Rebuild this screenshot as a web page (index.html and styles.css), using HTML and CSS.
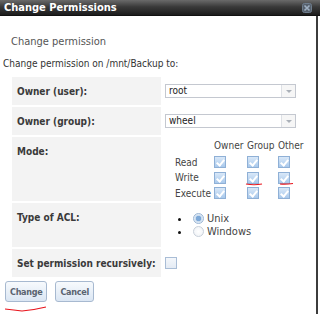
FILE: index.html
```html
<!DOCTYPE html>
<html lang="en">
    <head>
        <meta charset="UTF-8" />
        <title>Change Permissions</title>
        <link rel="stylesheet" href="styles.css">
    </head>
    <body>
        <div class="dialog">
            <div class="titlebar">
                <span class="title">Change Permissions</span>
                <svg class="close" width="10" height="10" viewBox="0 0 10 10">
                    <rect x="0.5" y="0.5" width="9" height="9" rx="2" fill="#56606c" stroke="#6d7c8c" />
                    <path d="M2.5 2.5 L7.5 7.5 M7.5 2.5 L2.5 7.5" stroke="#9fb0c2" stroke-width="1.6" />
                </svg>
            </div>

            <div class="content">
                <p class="subtitle">Change permission</p>
                <p class="intro">Change permission on /mnt/Backup to:</p>

                <div class="form">
                    <div class="row">
                        <div class="label">Owner (user):</div>
                        <div class="field">
                            <div class="select"><span>root</span><i class="arrow"></i></div>
                        </div>
                    </div>
                    <div class="row">
                        <div class="label">Owner (group):</div>
                        <div class="field">
                            <div class="select"><span>wheel</span><i class="arrow"></i></div>
                        </div>
                    </div>
                    <div class="row row-mode">
                        <div class="label">Mode:</div>
                        <div class="field">
                            <div class="mode">
                                <span></span><span>Owner</span><span>Group</span><span>Other</span>
                                <span>Read</span><i class="check on"></i><i class="check on"></i><i class="check on"></i>
                                <span>Write</span><i class="check on"></i><i class="check on"></i><i class="check on"></i>
                                <span>Execute</span><i class="check on"></i><i class="check on"></i><i class="check on"></i>
                            </div>
                        </div>
                    </div>
                    <div class="row row-acl">
                        <div class="label">Type of ACL:</div>
                        <div class="field">
                            <ul class="acl">
                                <li><i class="radio on"></i>Unix</li>
                                <li><i class="radio"></i>Windows</li>
                            </ul>
                        </div>
                    </div>
                    <div class="row">
                        <div class="label">Set permission recursively:</div>
                        <div class="field">
                            <i class="check"></i>
                        </div>
                    </div>
                </div>

                <div class="buttons">
                    <button class="btn">Change</button>
                    <button class="btn">Cancel</button>
                </div>
            </div>

            <!-- hand-drawn red marks -->
            <svg class="marks" width="320" height="314" viewBox="0 0 320 314">
                <path d="M246 184 Q254 185.5 262 184" />
                <path d="M280 184 Q286 184.5 293 183.5" />
                <path d="M5 309 Q14 310 22 311 Q34 310 46 307" />
            </svg>
        </div>
    </body>
</html>
```

FILE: styles.css
```css
* {
    margin: 0;
    padding: 0;
    box-sizing: border-box;
}

body {
    font-family: "DejaVu Sans", Verdana, sans-serif;
    font-stretch: condensed;
    font-size: 10px;
    color: #333;
    background: #fff;
}

.dialog {
    position: relative;
    width: 320px;
    height: 314px;
}

.titlebar {
    height: 16px;
    display: flex;
    align-items: center;
    justify-content: space-between;
    padding: 0 8px 0 4px;
    background: linear-gradient(#6a6a6a, #3a3a3a 45%, #1c1c1c);
    border-bottom: 1px solid #111;
}

.title {
    color: #fff;
    font-weight: bold;
    font-size: 11px;
}

.close {
    display: block;
}

.content {
    height: 298px;
    width: 318px;
    border-right: 2px solid #3c3c3c;
}

.subtitle {
    padding: 19px 0 0 11px;
    line-height: 14px;
    color: #555;
    font-size: 11px;
}

.intro {
    padding: 8px 0 0 3px;
    line-height: 14px;
    color: #333;
}

.form {
    margin: 6px 8px 0 12px;
    display: flex;
    flex-direction: column;
    gap: 2px;
}

.row {
    display: flex;
    min-height: 28px;
}

.row-mode {
    min-height: 63px;
}

.row-acl {
    min-height: 44px;
}

.label {
    width: 149px;
    background: #f3f3f3;
    padding: 9px 0 0 5px;
    font-weight: bold;
    color: #3a3a3a;
    line-height: 12px;
}

.field {
    flex: 1;
    display: flex;
    align-items: center;
    padding-left: 4px;
}

.select {
    width: 131px;
    height: 14px;
    display: flex;
    border: 1px solid #c4c8d0;
    background: #fff;
    line-height: 12px;
    color: #222;
}

.select span {
    flex: 1;
    padding-left: 3px;
}

.arrow {
    width: 14px;
    border-left: 1px solid #dde0e5;
    background: #f6f6f6;
    position: relative;
}

.arrow::after {
    content: "";
    position: absolute;
    left: 4px;
    top: 5px;
    border: 3px solid transparent;
    border-top: 3px solid #aab0b8;
}

.mode {
    display: grid;
    grid-template-columns: 39px 33px 31px 24px;
    grid-auto-rows: 15.5px;
    align-items: center;
    margin: 2px 0 0 10px;
    align-self: flex-start;
    color: #444;
}

.mode span:nth-child(-n+4) {
    align-self: start;
    line-height: 12px;
    padding-top: 1px;
}

.check {
    display: block;
    width: 12px;
    height: 12px;
    border: 1px solid #a9bdd6;
    background: linear-gradient(#f4f7fb, #e4ebf4);
}

.check.on {
    border-color: #8fb0d6;
    background: linear-gradient(#d9e8f8, #a9c9ec);
    position: relative;
}

.check.on::after {
    content: "";
    position: absolute;
    left: 3px;
    top: 1px;
    width: 3px;
    height: 6px;
    border: solid #fff;
    border-width: 0 2px 2px 0;
    transform: rotate(40deg);
}

.acl {
    list-style: disc;
    margin: 0 0 0 26px;
    align-self: flex-start;
    padding-top: 9px;
    color: #444;
    font-size: 11px;
}

.acl li {
    line-height: 13px;
}

.acl li::marker {
    color: #111;
}

.radio {
    display: inline-block;
    vertical-align: -2px;
    width: 11px;
    height: 11px;
    margin: 0 3px 0 2px;
    border-radius: 50%;
    border: 1px solid #c8d0da;
    background: radial-gradient(#fff, #edf0f4);
}

.radio.on {
    border-color: #9cb6d4;
    background: radial-gradient(#7ea9d8 0 2.5px, #c8dbef 3px, #eef4fa 5px);
}

.buttons {
    display: flex;
    gap: 8px;
    padding: 4px 0 0 5px;
}

.btn {
    height: 21px;
    padding: 0 4px;
    font-family: inherit;
    font-stretch: condensed;
    font-size: 9px;
    font-weight: bold;
    letter-spacing: -0.3px;
    color: #5a6370;
    border: 1px solid #a7b9d0;
    border-radius: 3px;
    background: linear-gradient(#f7fafd, #dbe6f3);
}

.marks {
    position: absolute;
    left: 0;
    top: 0;
    pointer-events: none;
}

.marks path {
    fill: none;
    stroke: #e8141c;
    stroke-width: 1.2;
}
```
